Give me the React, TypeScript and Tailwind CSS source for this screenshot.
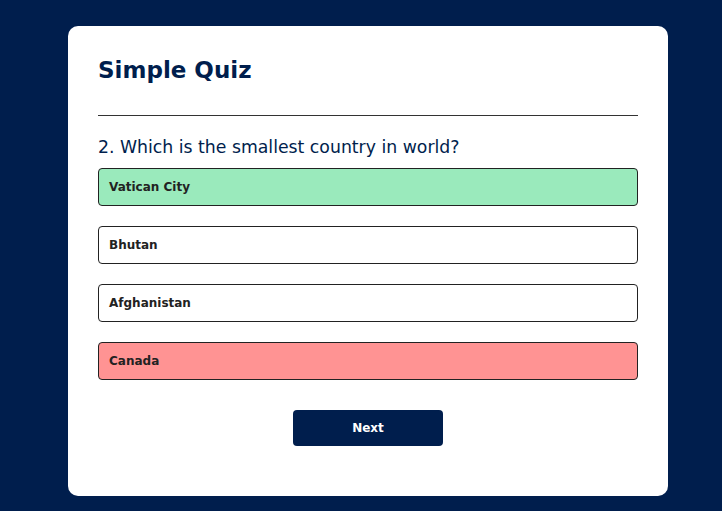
export default function App() {
  const answers = [
    { text: "Vatican City", state: "correct" },
    { text: "Bhutan", state: "" },
    { text: "Afghanistan", state: "" },
    { text: "Canada", state: "incorrect" },
  ]

  return (
    <div className="min-h-screen bg-[#001e4d] pt-[26px] font-['DejaVu_Sans',sans-serif]">
      <div className="ml-[68px] w-[600px] rounded-[10px] bg-white p-[30px]">
        {/* Title */}
        <h1 className="border-b border-[#333] pb-[30px] text-[23px] leading-[29px] font-bold text-[#001e4d]">
          Simple Quiz
        </h1>

        {/* Quiz */}
        <div className="py-5">
          <h2 className="text-[17.3px] leading-[22px] text-[#001e4d]">
            2. Which is the smallest country in world?
          </h2>
          <div className="flex flex-col">
            {answers.map((a) => (
              <button
                key={a.text}
                className={`my-[10px] w-full rounded border border-[#222] p-[10px] text-left text-[12px] leading-4 font-bold text-[#222] ${
                  a.state === "correct"
                    ? "bg-[#9aeabc]"
                    : a.state === "incorrect"
                    ? "bg-[#ff9393]"
                    : "bg-white"
                }`}
              >
                {a.text}
              </button>
            ))}
          </div>
          <button className="mx-auto mt-5 block w-[150px] rounded bg-[#001e4d] p-[10px] text-[12px] leading-4 font-bold text-white">
            Next
          </button>
        </div>
      </div>
    </div>
  )
}
